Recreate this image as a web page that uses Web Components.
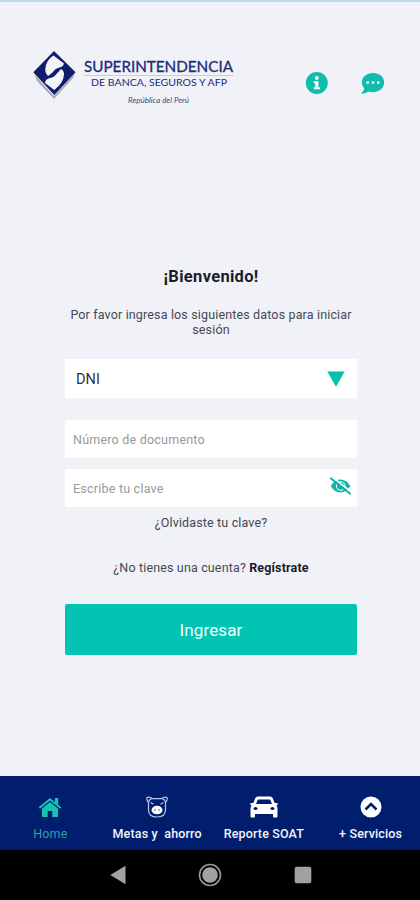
<!DOCTYPE html>
<html lang="es">
<head>
<meta charset="utf-8">
<title>Superintendencia de Banca, Seguros y AFP</title>
<style>
    html, body {
        margin: 0;
        height: 900px;
        overflow: hidden;
        font-family: Roboto, sans-serif;
    }
</style>
</head>
<body>
<sbs-app></sbs-app>

<script>
(function () {
    function define(name, html) {
        let tmpl = document.createElement('template');
        tmpl.innerHTML = html;
        customElements.define(name, class extends HTMLElement {
            constructor() {
                super();
                this.attachShadow({ mode: "open" });
                this.shadowRoot.appendChild(tmpl.content.cloneNode(true));
            }
        });
    }

    define('sbs-logo', `
        <style>
            :host { display: block; width: 205px; height: 60px; }
            svg { display: block; overflow: visible; }
            text { font-family: Lato, sans-serif; fill: #1c2b78; }
        </style>
        <svg width="205" height="60" viewBox="0 0 205 60">
            <path d="M4 24 L24 46 L45 23 L43 28 L24 49 L7 31Z" fill="#a9adb9"/>
            <path d="M24 1 L45.500 22.300 L24.300 45 L3.300 22.300Z" fill="#101c6c"/>
            <path d="M23.500 5.500 L34 13.500 Q33.500 16.500 30.500 17.300 Q25 18.500 23 22 L18.300 26 Q15 23.500 15.300 19 Q16 10 23.500 5.500Z" fill="#f4f5fa"/>
            <path d="M31 19 Q34.200 20.500 34 24.500 Q33.500 33 24.300 40 L15 33 Q15.200 29.500 18.500 28.500 Q24 27.500 26.500 24Z" fill="#f4f5fa"/>
            <text x="54" y="22.300" font-size="15" textLength="149" lengthAdjust="spacingAndGlyphs" stroke="#1c2b78" stroke-width=".3">SUPERINTENDENCIA</text>
            <path d="M54 25.500H203" stroke="#b9bdca" stroke-width=".7"/>
            <text x="61" y="35.500" font-size="10" textLength="136" lengthAdjust="spacingAndGlyphs">DE BANCA, SEGUROS Y AFP</text>
            <text x="98" y="52.800" font-size="6.800" font-style="italic" textLength="61" lengthAdjust="spacingAndGlyphs" fill-opacity=".9">República del Perú</text>
        </svg>
    `);

    define('top-bar', `
        <style>
            :host {
                display: flex;
                align-items: flex-start;
                height: 120px;
                box-sizing: border-box;
                padding: 48px 35px 0 30px;
                border-top: 2px solid #bad9eb;
            }
            nav { display: flex; gap: 32px; margin: 22px 0 0 70px; }
            svg { display: block; }
        </style>
        <sbs-logo></sbs-logo>
        <nav>
            <svg width="24" height="24" viewBox="0 0 24 24">
                <circle cx="11.800" cy="11" r="11" fill="#10bcac"/>
                <circle cx="11.800" cy="6" r="1.900" fill="#fff"/>
                <path d="M8.800 9.200h4.600v6h1.500v2H8.800v-2h1.400v-4H8.800z" fill="#fff"/>
            </svg>
            <svg width="24" height="24" viewBox="0 0 24 24">
                <path d="M12 1C5.800 1 .8 5 .8 10.300c0 2.300.9 4.300 2.500 6C3 18.700.5 20.900.5 21.100c-.2.300 0 .6.300.6 3 0 5.200-1.300 6.300-2.300 1.500.5 3.200.8 4.900.8 6.200 0 11.200-4.500 11.200-9.900S18.200 1 12 1z" fill="#10bcac"/>
                <g fill="#e6faf8"><circle cx="6.700" cy="10.600" r="1.400"/><circle cx="12" cy="10.600" r="1.400"/><circle cx="17.300" cy="10.600" r="1.400"/></g>
            </svg>
        </nav>
    `);

    define('form-field', `
        <style>
            :host {
                display: flex;
                align-items: center;
                justify-content: space-between;
                box-sizing: border-box;
                height: 38px;
                padding: 0 6px 0 8px;
                background: #fff;
                color: #999;
                font-size: 12.500px;
                letter-spacing: .22px;
            }
            :host([select]) {
                height: 39px;
                padding: 1px 12px 0 11px;
                color: #30323c;
                font-size: 14.500px;
                letter-spacing: .1px;
            }
        </style>
        <span><slot></slot></span>
        <slot name="icon"></slot>
    `);

    define('action-button', `
        <style>
            :host {
                display: flex;
                align-items: center;
                justify-content: center;
                height: 51px;
                padding-top: 2px;
                box-sizing: border-box;
                border-radius: 2px;
                background: #03c4b3;
                color: #effffc;
                font-size: 17px;
                letter-spacing: .1px;
            }
        </style>
        <slot></slot>
    `);

    define('login-form', `
        <style>
            :host {
                display: flex;
                flex-direction: column;
                width: 292px;
                margin-left: 65px;
                padding-top: 147px;
                text-align: center;
                font-size: 12.500px;
                line-height: 15px;
                color: #454855;
            }
            h1 { margin: 0; font-size: 16.500px; line-height: 20px; letter-spacing: .3px; color: #1b1c2c; }
            p { margin: 0; letter-spacing: .15px; }
            .intro { margin: 20px 0 21px; height: 31px; }
            .forgot { margin-top: 8px; }
            .register { margin: 30px 0 28.500px; }
            b { color: #1b1c2c; }
            svg { display: block; }
        </style>
        <h1>¡Bienvenido!</h1>
        <p class="intro">Por favor ingresa los siguientes datos para iniciar<br>sesión</p>
        <form-field select>DNI
            <svg slot="icon" width="18" height="16" viewBox="0 0 18 16"><path d="M.3.500h17.400L9 15.800z" fill="#00bfad"/></svg>
        </form-field>
        <form-field style="margin-top: 22px">Número de documento</form-field>
        <form-field style="margin-top: 11px">Escribe tu clave
            <svg slot="icon" width="21" height="18" viewBox="0 0 21 18" style="margin-top: -5px">
                <path d="M.7 9Q4.500 2.500 10.500 2.500T20.300 9Q16.500 15.500 10.500 15.500T.7 9z" fill="#16b4a5"/>
                <circle cx="10.700" cy="9" r="4.300" fill="none" stroke="#fff" stroke-width="1"/>
                <path d="M2.200.2L20.700 14.500" stroke="#fff" stroke-width="1.600"/>
                <path d="M1 1.500L20 16.500" stroke="#16b4a5" stroke-width="2.200" stroke-linecap="round"/>
            </svg>
        </form-field>
        <p class="forgot">¿Olvidaste tu clave?</p>
        <p class="register">¿No tienes una cuenta? <b>Regístrate</b></p>
        <action-button>Ingresar</action-button>
    `);

    define('tab-item', `
        <style>
            :host {
                display: flex;
                flex-direction: column;
                align-items: center;
                flex: 1 1 0;
                color: #f2f5ff;
                font-size: 12.500px;
                font-weight: 500;
                line-height: 16px;
                letter-spacing: .15px;
                white-space: pre;
            }
            :host([active]) { color: #2e9fae; font-weight: 400; }
            .icon { display: flex; align-items: center; justify-content: center; height: 26px; margin-bottom: 6px; }
        </style>
        <div class="icon"><slot name="icon"></slot></div>
        <span><slot></slot></span>
    `);

    define('tab-bar', `
        <style>
            :host {
                display: flex;
                height: 74px;
                box-sizing: border-box;
                margin: 0 -4px 0 -3px;
                padding-top: 18px;
                background: #001d6e;
            }
            svg { display: block; }
        </style>
        <tab-item active><svg slot="icon" width="24" height="21" viewBox="0 0 24 21">
                <path d="M12 5L4 11.500v7.800q0 .7.700.7h5v-6h4.600v6h5q.7 0 .7-.7v-7.800z" fill="#13c4b5"/>
                <path d="M1.300 11L12 2.200 22.700 11" fill="none" stroke="#13c4b5" stroke-width="2"/>
                <path d="M17 1h3.200v7L17 5.500z" fill="#13c4b5"/>
            </svg>Home</tab-item>
        <tab-item><svg slot="icon" width="22" height="22" viewBox="0 0 22 22">
                <g fill="none" stroke="#bac7e5" stroke-width="1.200">
                    <path d="M6.500 2.600Q4 .6 1 1.500 .3 4 2.500 6.500M15.500 2.600Q18 .6 21 1.500 21.700 4 19.500 6.500"/>
                    <path d="M6.500 2.600h9Q19 3 19.500 6.500V14Q19.500 21 11 21T2.500 14V6.500Q3 3 6.500 2.600z"/>
                    <path d="M4.500 6.500l3 1.700M17.500 6.500l-3 1.700"/>
                </g>
                <ellipse cx="11" cy="14" rx="5.500" ry="4.300" fill="#fff"/>
                <ellipse cx="9" cy="14" rx=".7" ry="1.300" fill="#7185bd"/><ellipse cx="13" cy="14" rx=".7" ry="1.300" fill="#7185bd"/>
            </svg>Metas y  ahorro</tab-item>
        <tab-item><svg slot="icon" width="28" height="22" viewBox="0 0 28 22">
                <path d="M8 .5h12q2 0 2.800 1.800L24.700 7H27q1 .2.700 1.300l-.5 1.200H26q1.500 1 1.500 3v8q0 1-1 1H24q-1 0-1-1V18H5v2.500q0 1-1 1H1.500q-1 0-1-1v-8q0-2 1.500-3H.8L.3 8.300Q0 7.200 1 7h2.300l1.900-4.700Q6 .5 8 .5z" fill="#fff"/>
                <path d="M8.500 3.500h11q.6 0 .9.600L22 8H6l1.600-3.900q.3-.6.900-.6z" fill="#001d6e"/>
                <ellipse cx="5.500" cy="12.500" rx="2" ry="1.500" fill="#001d6e"/><ellipse cx="22.500" cy="12.500" rx="2" ry="1.500" fill="#001d6e"/>
            </svg>Reporte SOAT</tab-item>
        <tab-item><svg slot="icon" width="22" height="22" viewBox="0 0 22 22">
                <circle cx="11" cy="11" r="10.500" fill="#fff"/>
                <path d="M5.500 13.500L11 8l5.500 5.500" fill="none" stroke="#001d6e" stroke-width="2.600"/>
            </svg>+ Servicios</tab-item>
    `);

    define('system-bar', `
        <style>
            :host { display: flex; align-items: center; justify-content: center; gap: 72px; height: 50px; padding-left: 2px; background: #000; }
            svg { display: block; }
        </style>
        <svg width="16" height="20" viewBox="0 0 16 20"><path d="M.3 10L15.500.8v18.400z" fill="#a1a1a1"/></svg>
        <svg width="24" height="24" viewBox="0 0 24 24">
            <circle cx="12" cy="12" r="10.500" fill="none" stroke="#979797" stroke-width="1.600"/>
            <circle cx="12" cy="12" r="7.800" fill="#a1a1a1"/>
        </svg>
        <svg width="18" height="18" viewBox="0 0 18 18"><rect x=".7" y=".7" width="16.600" height="16.600" rx="2" fill="#a1a1a1"/></svg>
    `);

    define('sbs-app', `
        <style>
            :host { display: flex; flex-direction: column; width: 420px; height: 900px; overflow: hidden; background: #f0f2f7; }
            tab-bar { margin-top: auto; }
        </style>
        <top-bar></top-bar>
        <login-form></login-form>
        <tab-bar></tab-bar>
        <system-bar></system-bar>
    `);
})();
</script>
</body>
</html>
